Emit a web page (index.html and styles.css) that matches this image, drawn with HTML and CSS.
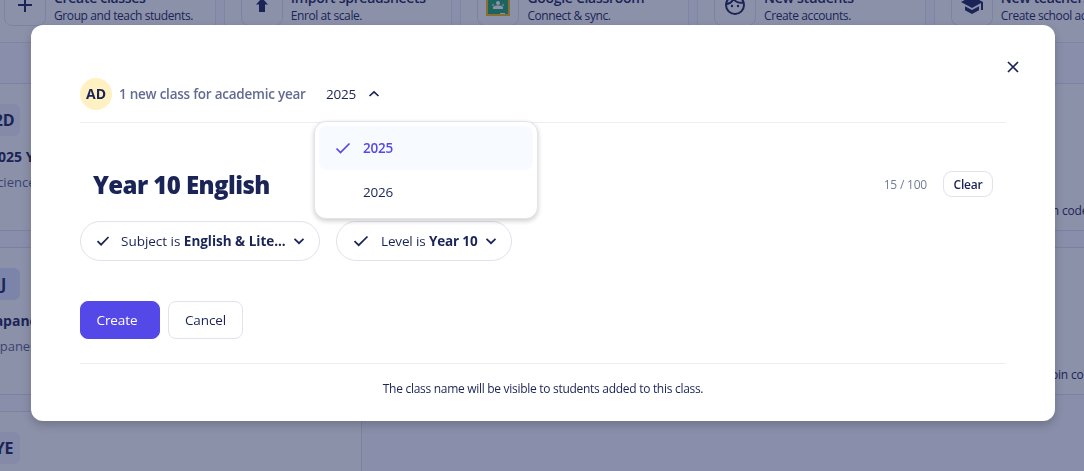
FILE: index.html
```html
<!DOCTYPE html>
<html lang="en">
  <head>
    <meta charset="UTF-8" />
    <meta name="viewport" content="width=device-width, initial-scale=1.0" />
    <title>Create class</title>
    <link rel="stylesheet" href="styles.css">
  </head>
  <body>
    <!-- Page behind the modal -->
    <div class="page">
      <div class="actions">
        <div class="action">
          <div class="action-icon">
            <svg width="24" height="24" viewBox="0 0 24 24"><path d="M12 5v14M5 12h14" fill="none" stroke="currentColor" stroke-width="2" /></svg>
          </div>
          <div class="action-text"><b>Create classes</b><span>Group and teach students.</span></div>
        </div>
        <div class="action">
          <div class="action-icon">
            <svg width="24" height="24" viewBox="0 0 24 24"><path d="M12 5l6 6.500h-3V19H9v-7.500H6z" fill="currentColor" /></svg>
          </div>
          <div class="action-text"><b>Import spreadsheets</b><span>Enrol at scale.</span></div>
        </div>
        <div class="action">
          <div class="action-icon">
            <svg width="24" height="24" viewBox="0 0 24 24">
              <rect width="24" height="22" y="1" fill="#f5b912" />
              <rect x="2" y="3" width="20" height="18" fill="#23a566" />
              <path d="M7 16v-1.500c0-1.500 3-2 5-2s5 .5 5 2V16z" fill="#fff" />
              <circle cx="12" cy="10" r="2" fill="#fff" />
              <circle cx="7" cy="12" r="1.300" fill="#8ed0af" />
              <circle cx="17" cy="12" r="1.300" fill="#8ed0af" />
              <path d="M14 20h5v1h-5z" fill="#fff" />
            </svg>
          </div>
          <div class="action-text"><b>Google Classroom</b><span>Connect &amp; sync.</span></div>
        </div>
        <div class="action">
          <div class="action-icon">
            <svg width="24" height="24" viewBox="0 0 24 24" fill="none" stroke="currentColor" stroke-width="2">
              <circle cx="12" cy="12" r="9" />
              <path d="M3 11c4 0 6-2 7.500-5 3 4 6 4 10 3.500" />
              <circle cx="9" cy="13" r="1.200" fill="currentColor" stroke="none" />
              <circle cx="15" cy="13" r="1.200" fill="currentColor" stroke="none" />
            </svg>
          </div>
          <div class="action-text"><b>New students</b><span>Create accounts.</span></div>
        </div>
        <div class="action">
          <div class="action-icon">
            <svg width="24" height="24" viewBox="0 0 24 24" fill="currentColor"><path d="M5 13.180v4L12 21l7-3.820v-4L12 17zM12 3L1 9l11 6 9-4.910V17h2V9z" /></svg>
          </div>
          <div class="action-text"><b>New teachers</b><span>Create school accounts.</span></div>
        </div>
      </div>
      <div class="classes">
        <div class="card">
          <div class="badge">2D</div>
          <h4>2025 Year 9</h4>
          <p>Science</p>
        </div>
        <div class="card"></div>
        <div class="card card-end"><p class="join">Join code</p></div>
        <div class="card">
          <div class="badge badge-blue">J</div>
          <h4>Japanese</h4>
          <p class="wide">Japanese</p>
        </div>
        <div class="card"></div>
        <div class="card card-end"><p class="join join-wide">Join code</p></div>
        <div class="card">
          <div class="badge">YE</div>
        </div>
      </div>
    </div>

    <!-- Modal -->
    <div class="modal-overlay"></div>
    <div class="modal">
      <button class="close" aria-label="Close">
        <svg width="14" height="14" viewBox="0 0 14 14"><path d="M2 2l10 10M12 2L2 12" /></svg>
      </button>

      <div class="modal-header">
        <span class="avatar">AD</span>
        <span class="summary">1 new class for academic year</span>
        <div class="year-picker">
          <button class="year-button">
            <span>2025</span>
            <svg width="12" height="8" viewBox="0 0 12 8"><path d="M1.500 6L6 1.800 10.500 6" /></svg>
          </button>
          <div class="year-menu">
            <div class="year-option selected">
              <svg width="16" height="12" viewBox="0 0 16 12"><path d="M1.500 6.500l4 4L14.500 1.500" /></svg>
              <span>2025</span>
            </div>
            <div class="year-option"><span>2026</span></div>
          </div>
        </div>
      </div>

      <div class="name-row">
        <h1>Year 10 English</h1>
        <span class="count">15 / 100</span>
        <button class="clear">Clear</button>
      </div>

      <div class="filters">
        <button class="pill pill-subject">
          <svg class="check" width="14" height="12" viewBox="0 0 14 12"><path d="M1.500 6.200l3.600 3.500L12.500 2" /></svg>
          <span>Subject is <b>English &amp; Lite...</b></span>
          <svg width="12" height="8" viewBox="0 0 12 8"><path d="M1.500 1.800L6 6.200l4.500-4.400" /></svg>
        </button>
        <button class="pill pill-level">
          <svg class="check" width="16" height="12" viewBox="0 0 16 12"><path d="M1.500 6.200l4.200 4L14.500 1.500" /></svg>
          <span>Level is <b>Year 10</b></span>
          <svg width="12" height="8" viewBox="0 0 12 8"><path d="M1.500 1.800L6 6.200l4.500-4.400" /></svg>
        </button>
      </div>

      <div class="buttons">
        <button class="btn btn-primary">Create</button>
        <button class="btn">Cancel</button>
      </div>

      <p class="note">The class name will be visible to students added to this class.</p>
    </div>
  </body>
</html>
```
FILE: styles.css
```css
* {
  box-sizing: border-box;
}
body {
  margin: 0;
  height: 471px;
  overflow: hidden;
  font-family: "Open Sans", "Noto Sans", sans-serif;
  font-size: 14px;
  color: #1a2456;
}
h1, h4, p {
  margin: 0;
}
button {
  font: inherit;
  color: inherit;
  background: none;
  border: 0;
  padding: 0;
}
svg {
  display: block;
  flex: none;
}

/* Page */
.page {
  height: 471px;
  overflow: hidden;
  background: #f9fbff;
}
.actions {
  display: flex;
  gap: 8px;
  width: 1176px;
  height: 61px;
  margin: -18px 0 0 -13px;
}
.action {
  display: flex;
  flex: none;
  gap: 8px;
  width: 228.700px;
  padding: 0 0 17px 16px;
  background: #fff;
  border: 1px solid #e4e8f2;
  border-top: 0;
}
.action-icon {
  display: flex;
  align-items: center;
  justify-content: center;
  width: 42px;
  height: 44px;
  padding-top: 2px;
  border: 1px solid #dfe3ee;
  border-radius: 8px;
}
.action-text {
  display: flex;
  flex-direction: column;
  padding-top: 7px;
  white-space: nowrap;
  line-height: 18px;
}
.action-text b {
  font-size: 14px;
  font-weight: 600;
  letter-spacing: -0.300px;
}
.action-text span {
  font-size: 12px;
  letter-spacing: -0.400px;
}
.classes {
  display: grid;
  grid-template-columns: repeat(3, 389px);
  grid-auto-rows: 148px;
  gap: 16px;
  margin: 40px 0 0 -27px;
}
.card {
  padding: 20px 0 0 16px;
  background: #fff;
  border: 1px solid #dde1ec;
}
.badge {
  display: flex;
  align-items: center;
  justify-content: center;
  width: 30px;
  height: 32px;
  padding-right: 2px;
  border-radius: 6px;
  background: #eef1f9;
  font-size: 16px;
  font-weight: 700;
  letter-spacing: -0.300px;
}
.badge-blue {
  padding-right: 3px;
  background: #dfe5ff;
}
.card h4 {
  margin-top: 11px;
  font-size: 14px;
  line-height: 20px;
}
.card p {
  margin-top: 5px;
  font-size: 13px;
  line-height: 20px;
  color: #5b648c;
}
.card .wide {
  margin-left: -1px;
}
.card .join {
  margin: 97px 0 0 239px;
  font-size: 12px;
  letter-spacing: -0.200px;
  color: #1a2456;
}
.card .join-wide {
  margin-left: 248px;
}

/* Modal */
.modal-overlay {
  position: fixed;
  inset: 0;
  background: rgba(26, 36, 86, 0.5);
}
.modal {
  position: fixed;
  top: 25px;
  left: 31px;
  width: 1024px;
  height: 396px;
  padding: 41px 49px 0;
  background: #fff;
  border-radius: 12px;
  box-shadow: 0 4px 10px rgba(0, 0, 0, 0.2);
}
.modal svg {
  fill: none;
  stroke: currentColor;
  stroke-width: 1.700;
}
.close {
  position: absolute;
  top: 35px;
  right: 35px;
}
.modal-header {
  display: flex;
  align-items: center;
  height: 57px;
  border-bottom: 1px solid #eceef5;
}
.avatar {
  width: 32px;
  height: 32px;
  border-radius: 50%;
  background: #fff1c2;
  line-height: 32px;
  text-align: center;
  font-size: 14px;
  font-weight: 700;
}
.summary {
  width: 206px;
  padding-left: 7px;
  white-space: nowrap;
  font-size: 13.500px;
  font-weight: 600;
  letter-spacing: -0.240px;
  color: #646b90;
}
.year-picker {
  position: relative;
}
.year-button {
  display: flex;
  align-items: center;
  gap: 12px;
  padding-left: 8px;
  font-size: 13.500px;
  letter-spacing: -0.200px;
}
.year-menu {
  position: absolute;
  top: 36px;
  left: -4px;
  width: 224px;
  height: 98px;
  padding: 4px;
  background: #fff;
  border: 1px solid #e3e4ea;
  border-radius: 12px;
  box-shadow: 0 2px 5px rgba(0, 0, 0, 0.2);
}
.year-option {
  display: flex;
  align-items: center;
  gap: 12px;
  height: 44px;
  padding-left: 44px;
  border-radius: 8px;
  font-size: 13.500px;
  letter-spacing: -0.200px;
}
.year-option.selected {
  padding-left: 16px;
  background: #f7faff;
  color: #5548e8;
  font-weight: 600;
}
.name-row {
  display: flex;
  align-items: center;
  height: 60px;
  margin-top: 31px;
  padding: 0 13px;
}
.name-row h1 {
  padding-top: 1px;
  font-size: 24px;
  font-weight: 800;
  letter-spacing: -0.580px;
}
.count {
  margin-left: auto;
  font-size: 12px;
  letter-spacing: -0.200px;
  color: #747b9b;
}
.clear {
  width: 50px;
  height: 26px;
  margin-left: 16px;
  border: 1px solid #e0e2ec;
  border-radius: 9px;
  font-size: 12px;
  font-weight: 600;
  letter-spacing: -0.200px;
}
.filters {
  display: flex;
  gap: 16px;
  margin-top: 7px;
}
.pill {
  display: flex;
  align-items: center;
  height: 40px;
  padding: 0 14px 0 15px;
  border: 1px solid #e0e2ec;
  border-radius: 20px;
  white-space: nowrap;
  font-size: 13.500px;
  letter-spacing: -0.150px;
}
.pill span {
  margin: 0 auto 0 11px;
}
.pill-subject {
  width: 240px;
  letter-spacing: -0.020px;
}
.pill-level {
  width: 176px;
  padding-left: 16px;
}
.pill-level span {
  margin-left: 12px;
}
.buttons {
  display: flex;
  gap: 8px;
  margin-top: 40px;
}
.btn {
  width: 75px;
  height: 38px;
  border: 1px solid #e0e2ec;
  border-radius: 8px;
  font-size: 13.500px;
  letter-spacing: -0.100px;
}
.btn-primary {
  width: 80px;
  padding-right: 6px;
  background: #5548e8;
  border-color: #5548e8;
  color: #fff;
}
.note {
  margin-top: 24px;
  padding-top: 15px;
  border-top: 1px solid #eceef2;
  text-align: center;
  font-size: 12px;
  letter-spacing: -0.290px;
  line-height: 20px;
}
```
